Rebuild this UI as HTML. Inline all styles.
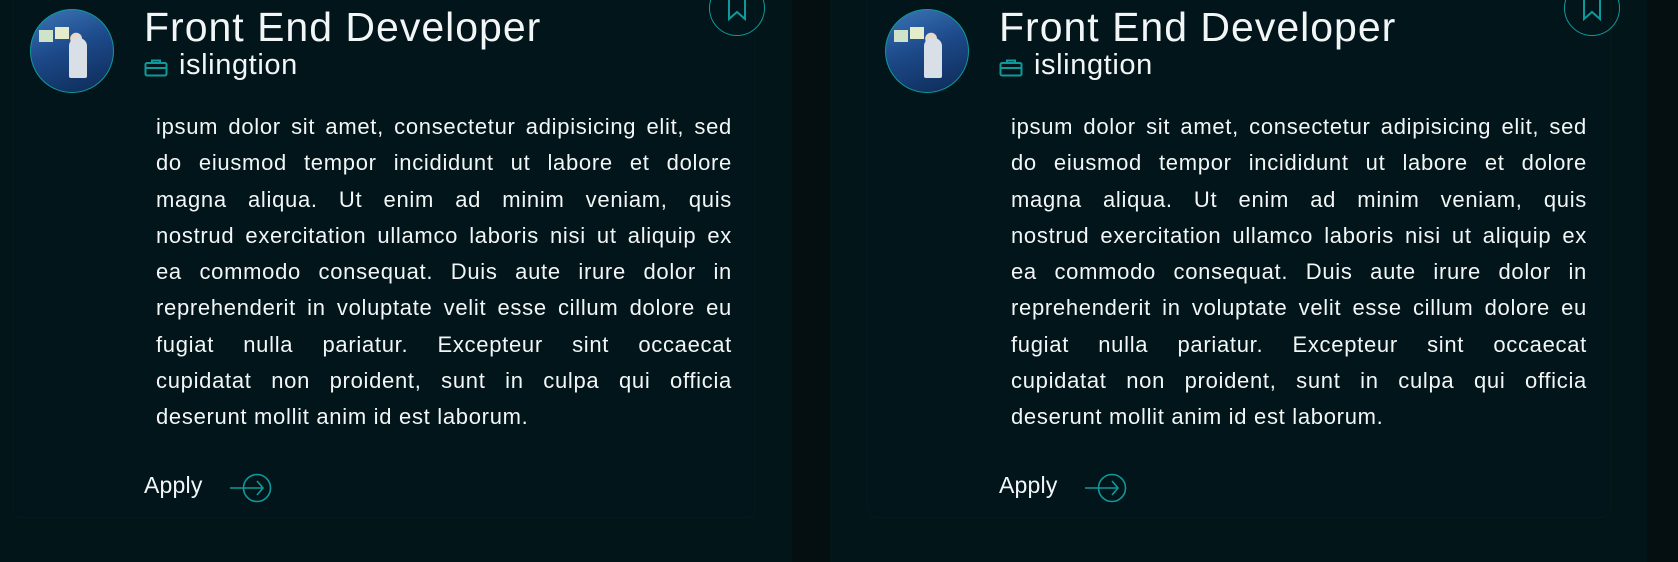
<!DOCTYPE html>
<html><head><meta charset="utf-8"><style>
html,body{margin:0;padding:0;}
body{width:1678px;height:562px;background:#050f11;position:relative;overflow:hidden;font-family:"Liberation Sans",sans-serif;color:#f2f6f6;}
.panel{position:absolute;top:0;height:562px;background:#021518;}
.card{position:absolute;top:-20px;height:536px;width:742px;border:1px solid #08191c;border-radius:10px;background:#02151a;}
.av{position:absolute;left:30px;top:9px;width:82px;height:82px;border-radius:50%;border:1px solid #0e9a9a;overflow:hidden;background:radial-gradient(circle at 55% 35%,#e9d9c8 0 8%,transparent 9%),linear-gradient(160deg,#3b76b8,#1d4a8a 45%,#0d2a55);}
.av:before{content:"";position:absolute;left:8px;top:20px;width:14px;height:12px;background:#cfe3c8;box-shadow:16px -3px 0 #e4eccb;}
.av:after{content:"";position:absolute;left:38px;top:28px;width:18px;height:40px;border-radius:8px 8px 2px 2px;background:#d8dfe6;}
h1{position:absolute;left:144px;top:4px;margin:0;font-weight:normal;font-size:41px;letter-spacing:1px;white-space:nowrap;}
.loc{position:absolute;left:179px;top:49px;font-size:29px;letter-spacing:0.6px;}
.brief{position:absolute;left:144px;top:59px;}
.p{position:absolute;left:156px;top:109px;width:576px;margin:0;font-size:22px;letter-spacing:0.7px;line-height:36.3px;}
.p div{text-align:justify;text-align-last:justify;white-space:nowrap;}
.p div:last-child{text-align-last:left;}
.apply{position:absolute;left:144px;top:472px;font-size:23px;letter-spacing:0.2px;}
.arr{position:absolute;left:230px;top:473px;}
.bm{position:absolute;left:709px;top:-20px;width:54px;height:54px;border:1px solid #0e9a9a;border-radius:50%;}
</style></head><body>
<div class="panel" style="left:0;width:792px"></div>
<div class="panel" style="left:830px;width:817px"></div>

<div style="position:absolute;left:0;top:0;width:800px;height:562px">
<div class="card" style="left:12px"></div>
<div class="av"></div>
<h1>Front End Developer</h1>
<svg class="brief" width="24" height="18" viewBox="0 0 24 18"><rect x="1.5" y="4" width="21" height="12.5" rx="1.5" fill="none" stroke="#0e9a9a" stroke-width="2"/><path d="M8 4V1.5h8V4M1.5 9h21" fill="none" stroke="#0e9a9a" stroke-width="2"/></svg>
<div class="loc">islingtion</div>
<div class="p"><div>ipsum dolor sit amet, consectetur adipisicing elit, sed</div><div>do eiusmod tempor incididunt ut labore et dolore</div><div>magna aliqua. Ut enim ad minim veniam, quis</div><div>nostrud exercitation ullamco laboris nisi ut aliquip ex</div><div>ea commodo consequat. Duis aute irure dolor in</div><div>reprehenderit in voluptate velit esse cillum dolore eu</div><div>fugiat nulla pariatur. Excepteur sint occaecat</div><div>cupidatat non proident, sunt in culpa qui officia</div><div>deserunt mollit anim id est laborum.</div></div>
<div class="apply">Apply</div>
<svg class="arr" width="44" height="30" viewBox="0 0 44 30"><circle cx="27" cy="15" r="13.5" fill="none" stroke="#0e9a9a" stroke-width="1.6"/><path d="M0 15H33M27 8l6 7-6 7" fill="none" stroke="#0e9a9a" stroke-width="1.6"/></svg>
<div class="bm"><svg style="position:absolute;left:17px;top:14px" width="20" height="26" viewBox="0 0 20 26"><path d="M2 1H18V24L10 17 2 24Z" fill="none" stroke="#0e9a9a" stroke-width="2"/></svg></div>
</div>

<div style="position:absolute;left:855px;top:0;width:823px;height:562px">
<div class="card" style="left:12px"></div>
<div class="av"></div>
<h1>Front End Developer</h1>
<svg class="brief" width="24" height="18" viewBox="0 0 24 18"><rect x="1.5" y="4" width="21" height="12.5" rx="1.5" fill="none" stroke="#0e9a9a" stroke-width="2"/><path d="M8 4V1.5h8V4M1.5 9h21" fill="none" stroke="#0e9a9a" stroke-width="2"/></svg>
<div class="loc">islingtion</div>
<div class="p"><div>ipsum dolor sit amet, consectetur adipisicing elit, sed</div><div>do eiusmod tempor incididunt ut labore et dolore</div><div>magna aliqua. Ut enim ad minim veniam, quis</div><div>nostrud exercitation ullamco laboris nisi ut aliquip ex</div><div>ea commodo consequat. Duis aute irure dolor in</div><div>reprehenderit in voluptate velit esse cillum dolore eu</div><div>fugiat nulla pariatur. Excepteur sint occaecat</div><div>cupidatat non proident, sunt in culpa qui officia</div><div>deserunt mollit anim id est laborum.</div></div>
<div class="apply">Apply</div>
<svg class="arr" width="44" height="30" viewBox="0 0 44 30"><circle cx="27" cy="15" r="13.5" fill="none" stroke="#0e9a9a" stroke-width="1.6"/><path d="M0 15H33M27 8l6 7-6 7" fill="none" stroke="#0e9a9a" stroke-width="1.6"/></svg>
<div class="bm"><svg style="position:absolute;left:17px;top:14px" width="20" height="26" viewBox="0 0 20 26"><path d="M2 1H18V24L10 17 2 24Z" fill="none" stroke="#0e9a9a" stroke-width="2"/></svg></div>
</div>
</body></html>
